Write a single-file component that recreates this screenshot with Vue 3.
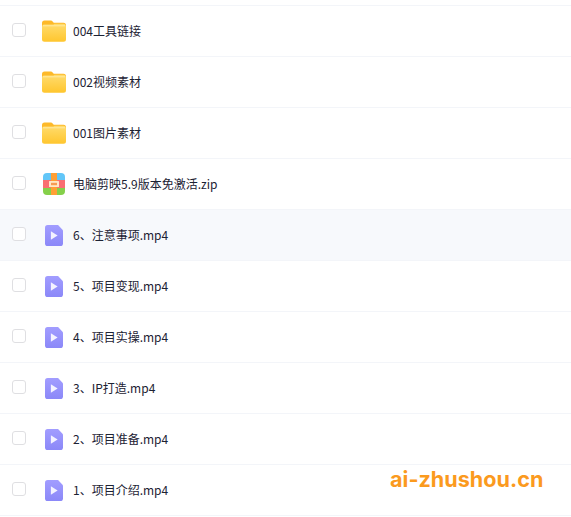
<script setup>
const files = [
  { name: '004工具链接', type: 'folder' },
  { name: '002视频素材', type: 'folder' },
  { name: '001图片素材', type: 'folder' },
  { name: '电脑剪映5.9版本免激活.zip', type: 'zip' },
  { name: '6、注意事项.mp4', type: 'video', hover: true },
  { name: '5、项目变现.mp4', type: 'video' },
  { name: '4、项目实操.mp4', type: 'video' },
  { name: '3、IP打造.mp4', type: 'video' },
  { name: '2、项目准备.mp4', type: 'video' },
  { name: '1、项目介绍.mp4', type: 'video' }
];
</script>

<template>
  <div class="page">
    <ul class="file-list">
      <li v-for="file in files" :key="file.name" class="file-row" :class="{ hover: file.hover }">
        <span class="check"></span>
        <span class="icon">
          <svg v-if="file.type === 'folder'" width="24" height="22" viewBox="0 0 24 22">
            <defs>
              <linearGradient id="folderFront" x1="0" y1="0" x2="0" y2="1">
                <stop offset="0" stop-color="#ffdc6e" />
                <stop offset="1" stop-color="#ffc62e" />
              </linearGradient>
            </defs>
            <path d="M0 3a2.500 2.500 0 0 1 2.500-2.500h6c1 0 1.600.4 2.200 1.100l1 1.100H21.500A2.500 2.500 0 0 1 24 5.200V10H0z" fill="#fdb92a" />
            <path d="M0 6.500a2 2 0 0 1 2-2h9.500l1-.8h9a2.500 2.500 0 0 1 2.500 2.500v13a2.500 2.500 0 0 1-2.500 2.500h-19A2.500 2.500 0 0 1 0 19.200z" fill="url(#folderFront)" />
            <path d="M1 5.800h22" stroke="#ffeeb0" stroke-width=".8" />
          </svg>
          <svg v-else-if="file.type === 'zip'" width="22" height="22" viewBox="0 0 22 22">
            <defs>
              <clipPath id="zipBox"><rect width="22" height="22" rx="4" /></clipPath>
            </defs>
            <g clip-path="url(#zipBox)">
              <rect width="22" height="8" fill="#62c6f8" />
              <rect y="7" width="22" height="8" fill="#f96f72" />
              <rect y="15" width="22" height="7" fill="#85d04a" />
              <rect x="8" width="6" height="22" fill="#ff9f35" />
              <rect x="6" y="8" width="10" height="6" rx=".6" fill="#ffe6c8" />
              <rect x="8" y="9.800" width="6" height="2.400" fill="#f79a55" />
            </g>
          </svg>
          <svg v-else class="video-icon" width="18" height="21" viewBox="0 0 20 22" preserveAspectRatio="none">
            <defs>
              <linearGradient id="videoBody" x1="0" y1="0" x2="0" y2="1">
                <stop offset="0" stop-color="#a29dff" />
                <stop offset="1" stop-color="#8b88f8" />
              </linearGradient>
            </defs>
            <path d="M3 0h11.500L20 5.500V19a3 3 0 0 1-3 3H3a3 3 0 0 1-3-3V3a3 3 0 0 1 3-3z" fill="url(#videoBody)" />
            <path d="M6.500 6.500v9l7.500-4.500z" fill="#f4f3ff" />
          </svg>
        </span>
        <span class="name">{{ file.name }}</span>
      </li>
    </ul>
    <div class="watermark">ai-zhushou.cn</div>
  </div>
</template>

<style scoped>
.page {
  position: relative;
  width: 571px;
  height: 517px;
  overflow: hidden;
  background: #fff;
  padding-top: 5px;
  box-sizing: border-box;
  font-family: "Noto Sans CJK SC", "Noto Sans", sans-serif;
}

.file-list {
  list-style: none;
  margin: 0;
  padding: 0;
  border-top: 1px solid #f3f5f9;
}

.file-row {
  display: flex;
  align-items: center;
  height: 50px;
  border-bottom: 1px solid #f3f5f9;
  padding-left: 12px;
}

.file-row.hover {
  background: #f7f9fc;
}

.check {
  width: 14px;
  height: 14px;
  box-sizing: border-box;
  border: 1px solid #dfdfe2;
  border-radius: 3px;
  background: #fff;
  margin-top: -3px;
}

.icon {
  width: 24px;
  height: 22px;
  margin-left: 16px;
  display: flex;
  justify-content: center;
  flex-shrink: 0;
}

.video-icon {
  margin-top: 1px;
}

.name {
  margin-left: 7px;
  margin-bottom: 2px;
  font-size: 12px;
  color: #1c2233;
}

.watermark {
  position: absolute;
  left: 390px;
  top: 466px;
  font-family: "Inter", sans-serif;
  font-weight: 700;
  font-size: 21.6px;
  color: #fb9a1e;
}
</style>
